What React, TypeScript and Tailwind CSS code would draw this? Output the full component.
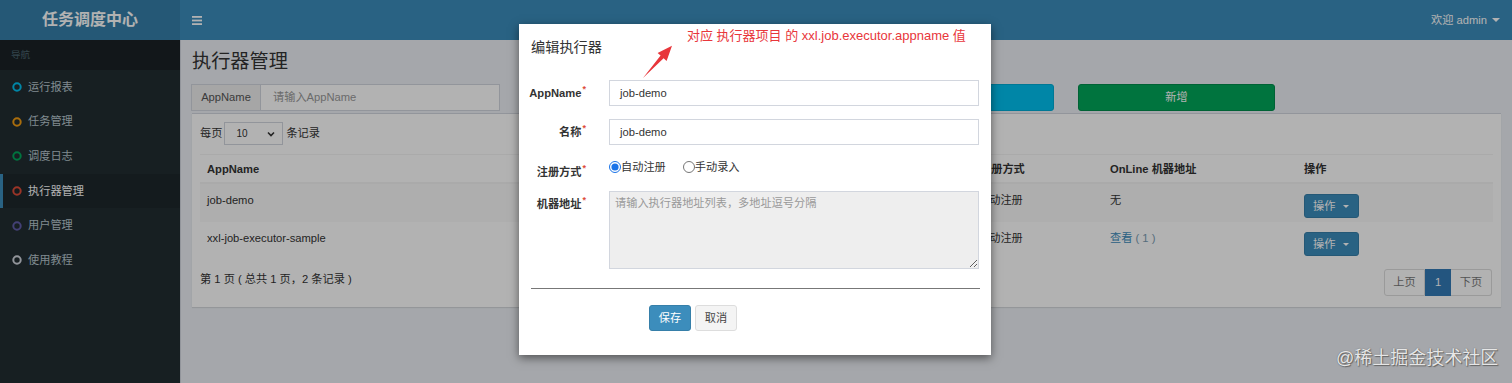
import React from "react";

const FONT = "font-['Liberation_Sans','Noto_Sans_CJK_SC',sans-serif]";

function Ring({ color }: { color: string }) {
  return (
    <svg width="10" height="10" viewBox="0 0 10 10" className="shrink-0">
      <circle cx="5" cy="5" r="3.7" fill="none" stroke={color} strokeWidth="2" />
    </svg>
  );
}

function Caret({ color = "border-t-white", size = "small" }: { color?: string; size?: string }) {
  return size === "small" ? (
    <span className={`inline-block w-0 h-0 border-x-[3px] border-x-transparent border-t-[3px] ${color}`} />
  ) : (
    <span className={`inline-block w-0 h-0 border-x-[4px] border-x-transparent border-t-[4px] ${color}`} />
  );
}

const menu = [
  { t: "运行报表", c: "#00c0ef" },
  { t: "任务管理", c: "#f39c12" },
  { t: "调度日志", c: "#00a65a" },
  { t: "执行器管理", c: "#dd4b39", active: true },
  { t: "用户管理", c: "#605ca8" },
  { t: "使用教程", c: "#d2d6de" },
];

const COLS = "grid grid-cols-[320px_240px_213px_130px_194px_195px]";

function OpButton() {
  return (
    <div className="mt-[2px] flex items-center w-[55px] h-[24px] bg-[#3c8dbc] border border-[#367fa9] rounded-[3px] text-white text-[11.2px]">
      <span className="pl-[8px] w-[38px]">操作</span>
      <Caret />
    </div>
  );
}

function Label({ text, extra = "" }: { text: string; extra?: string }) {
  return (
    <div className={`-ml-[2px] w-[57px] shrink-0 flex justify-end whitespace-nowrap font-bold ${extra}`}>
      <span>{text}</span>
      <span className="text-[#dd4b39] text-[9px] leading-none ml-[1px]">*</span>
    </div>
  );
}

export default function App() {
  return (
    <div className={`relative w-[1512px] h-[383px] overflow-hidden ${FONT} text-[#333]`}>
      {/* page */}
      <div className="flex flex-col w-full h-full">
        <div className="flex h-[40px] shrink-0">
          <div className="w-[180px] bg-[#367fa9] flex items-center justify-center text-white font-bold text-[16px]">
            任务调度中心
          </div>
          <div className="flex-1 bg-[#3c8dbc] flex items-center justify-between pl-[12px] pr-[12px]">
            <svg width="10" height="9" viewBox="0 0 10 9">
              <rect x="0" y="0" width="10" height="1.8" fill="#fff" />
              <rect x="0" y="3.6" width="10" height="1.8" fill="#fff" />
              <rect x="0" y="7.2" width="10" height="1.8" fill="#fff" />
            </svg>
            <div className="flex items-center gap-[5px] text-white text-[11.2px]">
              <span>欢迎 admin</span>
              <Caret size="big" />
            </div>
          </div>
        </div>
        <div className="flex flex-1">
          <div className="w-[180px] bg-[#222d32] shrink-0">
            <div className="h-[30px] bg-[#1a2226] flex items-center pl-[11px] text-[9.6px] text-[#4b646f]">导航</div>
            {menu.map((m) => (
              <div
                key={m.t}
                className={
                  m.active
                    ? "h-[34.6px] flex items-center gap-[6px] pl-[9px] border-l-[3px] border-[#3c8dbc] bg-[#1e282c] text-white text-[11.2px]"
                    : "h-[34.6px] flex items-center gap-[6px] pl-[12px] text-[#b8c7ce] text-[11.2px]"
                }
              >
                <Ring color={m.c} />
                <span>{m.t}</span>
              </div>
            ))}
          </div>
          <div className="flex-1 bg-[#ecf0f5] border-l border-[#d2d6de] px-[10px]">
            <div className="pl-[1px] pt-[10px] text-[19.2px] leading-[24px] text-[#333]">执行器管理</div>
            <div className="mt-[10px] flex h-[27px] gap-[24px]">
              <div className="flex w-[309px]">
                <div className="w-[70px] bg-[#eee] border border-[#d2d6de] flex items-center justify-center text-[11.2px] text-[#555]">AppName</div>
                <div className="flex-1 bg-white border border-l-0 border-[#d2d6de] flex items-center pl-[12px] text-[11.2px] text-[#999]">请输入AppName</div>
              </div>
              <div className="flex w-[309px]">
                <div className="w-[60px] bg-[#eee] border border-[#d2d6de]" />
                <div className="flex-1 bg-white border border-l-0 border-[#d2d6de]" />
              </div>
              <div className="w-[197px] bg-[#00c0ef] border border-[#00acd6] rounded-[3px]" />
              <div className="w-[197px] bg-[#00a65a] border border-[#008d4c] rounded-[3px] flex items-center justify-center text-white text-[11.2px]">新增</div>
            </div>
            <div className="mt-[2px] ml-[1px] mr-[1px] bg-white border-t border-[#d2d6de] shadow-[0_1px_1px_rgba(0,0,0,0.1)] px-[8px] pt-[8px] pb-[11px] text-[11.2px]">
              <div className="flex items-center h-[23px]">
                <span>每页</span>
                <div className="ml-[2px] w-[59px] h-[23px] border border-[#d2d6de] flex items-center justify-between pl-[11px] pr-[7px] text-[10px]">
                  <span>10</span>
                  <svg width="8" height="6" viewBox="0 0 8 6">
                    <path d="M1 1.5 L4 4.5 L7 1.5" fill="none" stroke="#333" strokeWidth="1.6" />
                  </svg>
                </div>
                <span className="ml-[3px]">条记录</span>
              </div>
              <div className="mt-[9px] border-t border-[#f4f4f4]">
                <div className={`${COLS} h-[29px] font-bold border-b-2 border-[#f4f4f4]`}>
                  <div className="pl-[7px] pt-[6px] leading-[16px]">AppName</div>
                  <div />
                  <div />
                  <div className="pl-[7px] pt-[6px] leading-[16px]">注册方式</div>
                  <div className="pl-[7px] pt-[6px] leading-[16px]">OnLine 机器地址</div>
                  <div className="pl-[7px] pt-[6px] leading-[16px]">操作</div>
                </div>
                <div className={`${COLS} h-[38px] bg-[#f9f9f9]`}>
                  <div className="pl-[7px] pt-[8px] leading-[16px]">job-demo</div>
                  <div />
                  <div />
                  <div className="pl-[5px] pt-[8px] leading-[16px]">自动注册</div>
                  <div className="pl-[7px] pt-[8px] leading-[16px]">无</div>
                  <div className="pl-[7px] pt-[8px]"><OpButton /></div>
                </div>
                <div className={`${COLS} h-[38px]`}>
                  <div className="pl-[7px] pt-[8px] leading-[16px]">xxl-job-executor-sample</div>
                  <div />
                  <div />
                  <div className="pl-[5px] pt-[8px] leading-[16px]">自动注册</div>
                  <div className="pl-[7px] pt-[8px] leading-[16px]">
                    <span className="text-[#3c8dbc]">查看</span>
                    <span className="text-[#7a9cb3]"> ( 1 )</span>
                  </div>
                  <div className="pl-[7px] pt-[8px]"><OpButton /></div>
                </div>
              </div>
              <div className="mt-[9px] flex justify-between h-[27px]">
                <div className="pt-[2px] leading-[16px]">第 1 页 ( 总共 1 页，2 条记录 )</div>
                <div className="flex text-[11.2px] mr-[1px]">
                  <div className="w-[41px] border border-[#ddd] rounded-l-[3px] flex items-center justify-center text-[#777]">上页</div>
                  <div className="w-[26px] bg-[#337ab7] border border-[#337ab7] flex items-center justify-center text-white">1</div>
                  <div className="w-[41px] border border-l-0 border-[#ddd] rounded-r-[3px] flex items-center justify-center text-[#777]">下页</div>
                </div>
              </div>
            </div>
          </div>
        </div>
      </div>

      {/* backdrop */}
      <div className="absolute inset-0 bg-black/30" />

      {/* modal */}
      <div className="absolute left-[519px] top-[24px] w-[472px] h-[331px] bg-white shadow-[0_3px_9px_rgba(0,0,0,0.5)] px-[12px]">
        <div className="pt-[13px] text-[14.2px] leading-[20px] text-[#333]">编辑执行器</div>
        <div className="absolute left-[168px] top-[4px] text-[13px] leading-[16px] text-[#e8363b] whitespace-nowrap">
          对应 执行器项目 的 xxl.job.executor.appname 值
        </div>
        <svg className="absolute left-[121px] top-[14px]" width="40" height="45" viewBox="0 0 40 45">
          <polygon points="3,40 23.6,20.3 26.6,22.9 32,7.7 17.6,15 20.6,17.6" fill="#e8363b" />
        </svg>

        <div className="mt-[23px] text-[11.2px]">
          <div className="flex items-center h-[26px]">
            <Label text="AppName" />
            <div className="ml-[23px] w-[371px] h-[26px] border border-[#d2d6de] flex items-center pl-[10px]">job-demo</div>
          </div>
          <div className="mt-[13px] flex items-center h-[26px]">
            <Label text="名称" />
            <div className="ml-[23px] w-[371px] h-[26px] border border-[#d2d6de] flex items-center pl-[10px]">job-demo</div>
          </div>
          <div className="mt-[13px] flex items-start h-[26px]">
            <Label text="注册方式" extra="pt-[6px] leading-[16px]" />
            <div className="ml-[23px] pt-[1px] leading-[16px] flex items-center">
              <input type="radio" checked readOnly className="m-0 w-[12px] h-[12px] accent-[#1a73e8]" />
              <span>自动注册</span>
              <input type="radio" readOnly className="ml-[17px] m-0 w-[12px] h-[12px]" />
              <span>手动录入</span>
            </div>
          </div>
          <div className="mt-[7px] flex items-start">
            <Label text="机器地址" extra="pt-[5px] leading-[16px]" />
            <textarea
              readOnly
              placeholder="请输入执行器地址列表，多地址逗号分隔"
              className="ml-[23px] w-[371px] h-[78px] bg-[#eee] border border-[#d2d6de] px-[5px] pt-[3px] text-[11.2px] leading-[16px] placeholder:text-[#999] outline-none"
            />
          </div>
        </div>
        <div className="mt-[19px] h-px bg-[#777] w-[449px]" />
        <div className="mt-[16px] flex text-[11.2px]">
          <div className="ml-[118px] w-[42px] h-[26px] bg-[#3c8dbc] border border-[#367fa9] rounded-[3px] flex items-center justify-center text-white">保存</div>
          <div className="ml-[4px] w-[42px] h-[26px] bg-[#f4f4f4] border border-[#ddd] rounded-[3px] flex items-center justify-center text-[#444]">取消</div>
        </div>
      </div>

      {/* watermark */}
      <div className="absolute left-[1336px] top-[346px] text-[18px] leading-[24px] text-[#e6e6e6] [text-shadow:0_0_1px_#555,1px_1px_1px_#666]">
        @稀土掘金技术社区
      </div>
    </div>
  );
}
